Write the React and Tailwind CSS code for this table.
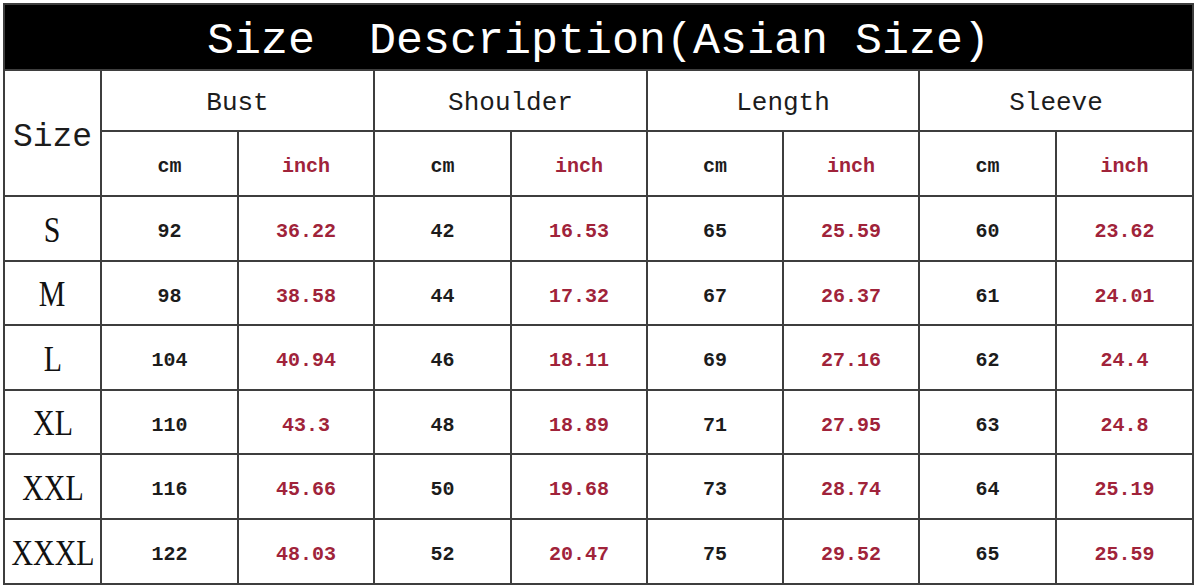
import React from "react";

const rows = [
  ["S", "92", "36.22", "42", "16.53", "65", "25.59", "60", "23.62"],
  ["M", "98", "38.58", "44", "17.32", "67", "26.37", "61", "24.01"],
  ["L", "104", "40.94", "46", "18.11", "69", "27.16", "62", "24.4"],
  ["XL", "110", "43.3", "48", "18.89", "71", "27.95", "63", "24.8"],
  ["XXL", "116", "45.66", "50", "19.68", "73", "28.74", "64", "25.19"],
  ["XXXL", "122", "48.03", "52", "20.47", "75", "29.52", "65", "25.59"],
];

const cell =
  "bg-white flex items-center justify-center pt-[7px] text-[20px] font-bold font-['Liberation_Mono','DejaVu_Sans_Mono',monospace]";

export default function App() {
  return (
    <div className="w-[1200px] h-[588px] bg-white overflow-hidden">
      <div className="ml-[3px] pt-[3px] w-[1191px]">
        <div className="flex flex-col gap-[2px] bg-[#3e3e3e] p-[2px]">
          <div className="h-[64px] bg-black flex items-center justify-center text-white text-[45px] leading-none pt-[8px] whitespace-pre font-['Liberation_Mono','DejaVu_Sans_Mono',monospace]">
            {"Size  Description(Asian Size)"}
          </div>
          <div className="grid gap-[2px] grid-cols-[95px_135px_134px_135px_134px_134px_134px_135px_135px] grid-rows-[59px_63px_63px_62px_63px_62px_63px_63px]">
            <div className="row-span-2 bg-white flex items-center justify-center pt-[10px] text-[33px] text-[#1c1c1c] font-['Liberation_Mono','DejaVu_Sans_Mono',monospace]">
              Size
            </div>
            {["Bust", "Shoulder", "Length", "Sleeve"].map((h) => (
              <div
                key={h}
                className="col-span-2 bg-white flex items-center justify-center pt-[6px] text-[26px] text-[#1c1c1c] font-['Liberation_Mono','DejaVu_Sans_Mono',monospace]"
              >
                {h}
              </div>
            ))}
            {[0, 1, 2, 3].map((i) => (
              <React.Fragment key={i}>
                <div className={cell + " text-[#1c1c1c]"}>cm</div>
                <div className={cell + " text-[#a0233a]"}>inch</div>
              </React.Fragment>
            ))}
            {rows.map((r) => (
              <React.Fragment key={r[0]}>
                <div className="bg-white flex items-center justify-center pt-[2px] text-[#111]">
                  <span className="text-[36px] leading-none scale-x-[0.83] font-['Liberation_Serif','DejaVu_Serif',serif]">
                    {r[0]}
                  </span>
                </div>
                {r.slice(1).map((v, j) => (
                  <div
                    key={j}
                    className={cell + (j % 2 === 0 ? " text-[#1c1c1c]" : " text-[#a0233a]")}
                  >
                    {v}
                  </div>
                ))}
              </React.Fragment>
            ))}
          </div>
        </div>
      </div>
    </div>
  );
}
